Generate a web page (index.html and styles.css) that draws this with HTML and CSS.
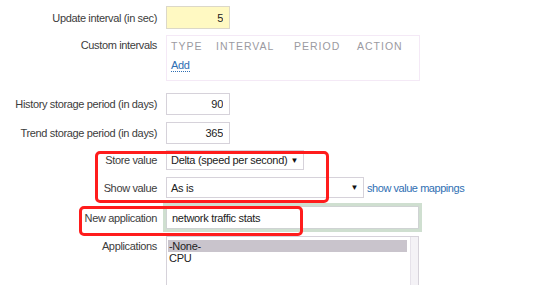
FILE: index.html
```html
<!DOCTYPE html>
<html lang="en">
<head>
  <meta charset="UTF-8" />
  <meta name="viewport" content="width=device-width, initial-scale=1" />
  <title>Item - preprocessing</title>
  <link rel="stylesheet" href="styles.css">
</head>
<body>
  <div class="form">
    <div class="row row-update">
      <label for="delay">Update interval (in sec)</label>
      <input type="text" id="delay" class="field num highlight" value="5" />
    </div>

    <div class="row row-custom">
      <label>Custom intervals</label>
      <div class="intervals">
        <div class="intervals-head">
          <span class="col-type">Type</span>
          <span class="col-interval">Interval</span>
          <span class="col-period">Period</span>
          <span class="col-action">Action</span>
        </div>
        <a href="#" class="add-link">Add</a>
      </div>
    </div>

    <div class="row row-history">
      <label for="history">History storage period (in days)</label>
      <input type="text" id="history" class="field num" value="90" />
    </div>

    <div class="row row-trend">
      <label for="trends">Trend storage period (in days)</label>
      <input type="text" id="trends" class="field num" value="365" />
    </div>

    <div class="row row-store">
      <label>Store value</label>
      <div class="select select-store">
        <span>Delta (speed per second)</span>
        <span class="arrow">▼</span>
      </div>
    </div>

    <div class="row row-show">
      <label>Show value</label>
      <div class="field-line">
        <div class="select select-show">
          <span>As is</span>
          <span class="arrow">▼</span>
        </div>
        <a href="#" class="mappings-link">show value mappings</a>
      </div>
    </div>

    <div class="row row-newapp">
      <label for="new_application">New application</label>
      <input type="text" id="new_application" class="field wide focused" value="network traffic stats" />
    </div>

    <div class="row row-apps">
      <label>Applications</label>
      <div class="listbox">
        <div class="options">
          <div class="option selected">-None-</div>
          <div class="option">CPU</div>
        </div>
        <div class="scroll-track"></div>
      </div>
    </div>
  </div>

  <div class="mark mark-values"></div>
  <div class="mark mark-app"></div>
</body>
</html>
```

FILE: styles.css
```css
:root {
  --text-color: #363636;
  --label-color: #3c3c3c;
  --border-color: #d6d2da;
  --link-color: #2f6fb3;
  --mark-color: #ff1c1c;
}

body {
  margin: 0;
  padding: 0;
  background: #fff;
  font-family: 'Liberation Sans', Arial, sans-serif;
  font-size: 11px;
  letter-spacing: -0.3px;
  color: var(--text-color);
  overflow: hidden;
}

.form {
  display: flex;
  flex-direction: column;
  padding-top: 6px;
}

.row {
  display: grid;
  grid-template-columns: 157px 1fr;
  column-gap: 9px;
  align-items: center;
}

.row label {
  text-align: right;
  color: var(--label-color);
  letter-spacing: -0.35px;
  white-space: nowrap;
}

.row-custom { margin-top: 6px; align-items: start; }
.row-custom label { padding-top: 4px; }
.row-history { margin-top: 12px; }
.row-trend { margin-top: 7px; }
.row-store { margin-top: 6px; }
.row-show { margin-top: 7px; }
.row-newapp { margin-top: 8px; }
.row-apps { margin-top: 7px; align-items: start; }
.row-apps label { padding-top: 4px; }

.field {
  box-sizing: border-box;
  height: 22px;
  border: 1px solid var(--border-color);
  background: #fff;
  font-family: inherit;
  font-size: 11px;
  letter-spacing: -0.3px;
  color: #222;
  padding: 0 6px;
  outline: none;
}

.num {
  width: 64px;
  text-align: right;
}

.highlight {
  background: #fff9c2;
  border-color: #dcd8c8;
  height: 23px;
}

.wide {
  width: 253px;
  padding-left: 5px;
}

.focused {
  height: 23px;
  box-shadow: 0 0 0 3px #cfdfd0;
  border-color: #cfd3d3;
}

.intervals {
  box-sizing: border-box;
  width: 254px;
  height: 46px;
  border: 1px solid #f4e9f6;
  padding: 4px 4px 0 4px;
}

.intervals-head {
  display: flex;
  color: #9b9aa1;
  text-transform: uppercase;
  letter-spacing: 1px;
  font-size: 10.5px;
}

.col-type { width: 45px; }
.col-interval { width: 78px; }
.col-period { width: 63px; }

.add-link {
  display: inline-block;
  margin-top: 7px;
  color: var(--link-color);
  text-decoration: none;
  border-bottom: 1px dotted var(--link-color);
  line-height: 12px;
}

.select {
  box-sizing: border-box;
  display: flex;
  justify-content: space-between;
  align-items: center;
  height: 20px;
  border: 1px solid var(--border-color);
  padding: 0 5px 0 4px;
  color: #222;
  white-space: nowrap;
}

.select-store { width: 138px; }
.select-show { width: 198px; height: 21px; }

.arrow {
  font-size: 8px;
  color: #111;
}

.field-line {
  display: flex;
  align-items: center;
  gap: 3px;
}

.mappings-link {
  color: var(--link-color);
  text-decoration: none;
  letter-spacing: -0.45px;
}

.listbox {
  box-sizing: border-box;
  display: flex;
  width: 253px;
  height: 50px;
  border: 1px solid var(--border-color);
  border-bottom: none;
  padding: 3px 0 0 1px;
}

.options {
  flex: 1;
}

.option {
  height: 12px;
  line-height: 12px;
  padding-left: 1px;
  color: #222;
}

.option.selected {
  background: #c9c4cc;
  margin-right: 3px;
}

.scroll-track {
  width: 7px;
  margin-top: -3px;
  background: #f4f2f6;
  border-left: 1px solid #e6e2ea;
}

.mark {
  position: absolute;
  box-sizing: border-box;
  border: 3px solid var(--mark-color);
  border-radius: 5px;
}

.mark-values {
  left: 95px;
  top: 151px;
  width: 234px;
  height: 52px;
}

.mark-app {
  left: 79px;
  top: 206px;
  width: 224px;
  height: 30px;
}
```
